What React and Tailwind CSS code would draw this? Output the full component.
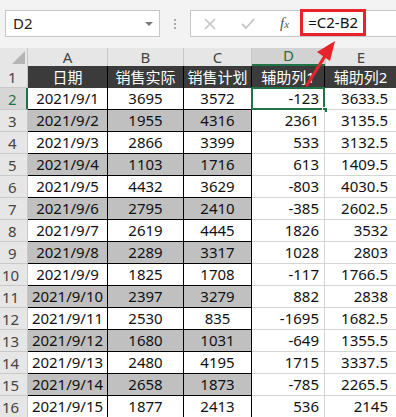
import React from "react";

const rows = [
  ["2021/9/1", "3695", "3572", "-123", "3633.5"],
  ["2021/9/2", "1955", "4316", "2361", "3135.5"],
  ["2021/9/3", "2866", "3399", "533", "3132.5"],
  ["2021/9/4", "1103", "1716", "613", "1409.5"],
  ["2021/9/5", "4432", "3629", "-803", "4030.5"],
  ["2021/9/6", "2795", "2410", "-385", "2602.5"],
  ["2021/9/7", "2619", "4445", "1826", "3532"],
  ["2021/9/8", "2289", "3317", "1028", "2803"],
  ["2021/9/9", "1825", "1708", "-117", "1766.5"],
  ["2021/9/10", "2397", "3279", "882", "2838"],
  ["2021/9/11", "2530", "835", "-1695", "1682.5"],
  ["2021/9/12", "1680", "1031", "-649", "1355.5"],
  ["2021/9/13", "2480", "4195", "1715", "3337.5"],
  ["2021/9/14", "2658", "1873", "-785", "2265.5"],
  ["2021/9/15", "1877", "2413", "536", "2145"],
];

const font = { fontFamily: '"Noto Sans", "Noto Sans CJK SC", sans-serif' };

export default function App() {
  return (
    <div
      className="relative w-[396px] h-[417px] overflow-hidden bg-[#f0f0f0] text-[15px] leading-none text-[#111]"
      style={font}
    >
      {/* Formula bar */}
      <div className="flex items-center h-[48px] pt-[10px] pb-[11px] bg-[#f3f3f3]">
        <div className="ml-[5px] w-[155px] h-[27px] bg-white border border-[#c6c6c6] flex items-center justify-between pl-[7px] pr-[6px]">
          <span className="text-[15px] text-[#222]">D2</span>
          <span className="w-0 h-0 border-l-[4px] border-r-[4px] border-t-[4px] border-l-transparent border-r-transparent border-t-[#777]" />
        </div>
        <div className="w-[30px] flex flex-col items-center gap-[2px]">
          <span className="w-[2px] h-[2px] bg-[#aaa]" />
          <span className="w-[2px] h-[2px] bg-[#aaa]" />
          <span className="w-[2px] h-[2px] bg-[#aaa]" />
        </div>
        <div className="flex-1 h-[27px] bg-white border border-r-0 border-[#c6c6c6] flex items-center">
          <svg width="14" height="14" viewBox="0 0 14 14" className="ml-[12px]">
            <path d="M2 2 L12 12 M12 2 L2 12" stroke="#c4c4c4" strokeWidth="1.6" />
          </svg>
          <svg width="16" height="14" viewBox="0 0 16 14" className="ml-[23px]">
            <path d="M2 7 L6 11 L14 2" stroke="#c4c4c4" strokeWidth="1.8" fill="none" />
          </svg>
          <span
            className="ml-[24px] text-[15px] italic text-[#555]"
            style={{ fontFamily: '"Liberation Serif", "DejaVu Serif", serif' }}
          >
            f<span className="text-[11px]">x</span>
          </span>
          <span className="ml-[11px] -mt-[3px] w-[66px] h-[27px] border-[3px] border-[#e8232b] flex items-center justify-center text-[15px] text-[#111]">
            =C2-B2
          </span>
        </div>
      </div>

      {/* Column headers */}
      <div className="flex h-[18px] bg-[#e6e6e6] text-[#444]">
        <div className="w-[28px] h-full relative border-r border-[#c8c8c8]">
          <svg className="absolute left-[12px] top-[3px]" width="13" height="13" viewBox="0 0 13 13">
            <path d="M13 0 L13 13 L0 13 Z" fill="#b5b5b5" />
          </svg>
        </div>
        <div className="w-[80px] flex items-end justify-center pb-[1px] border-r border-[#c8c8c8]">A</div>
        <div className="w-[76px] flex items-end justify-center pb-[1px] border-r border-[#c8c8c8]">B</div>
        <div className="w-[68px] flex items-end justify-center pb-[1px] border-r border-[#c8c8c8]">C</div>
        <div className="w-[73px] flex items-end justify-center pb-[1px] bg-[#d2d2d2] text-[#217346] border-b-2 border-[#217346]">D</div>
        <div className="flex-1 flex items-end justify-center pb-[1px] border-l border-[#c8c8c8]">E</div>
      </div>

      {/* Row 1 */}
      <div className="flex h-[22px]">
        <div className="w-[28px] bg-[#e6e6e6] text-[#444] flex items-end pl-[8px] pb-[2px] border-r border-b border-[#c8c8c8]">1</div>
        <div className="w-[80px] bg-[#3b3b3b] text-white flex items-center justify-center border-r border-black">日期</div>
        <div className="w-[76px] bg-[#3b3b3b] text-white flex items-center justify-center border-r border-black">销售实际</div>
        <div className="w-[68px] bg-[#3b3b3b] text-white flex items-center justify-center border-r border-black">销售计划</div>
        <div className="w-[73px] bg-[#3b3b3b] text-white flex items-center justify-center border-r border-black">辅助列1</div>
        <div className="flex-1 bg-[#3b3b3b] text-white flex items-center justify-center">辅助列2</div>
      </div>

      {/* Data rows */}
      {rows.map((r, i) => {
        const n = i + 2;
        const gray = n % 2 === 1;
        const sel = n === 2;
        const fill = gray ? "bg-[#c0c0c0]" : "bg-white";
        return (
          <div key={n} className="flex h-[22px]">
            <div
              className={
                sel
                  ? "w-[28px] bg-[#d6d6d6] text-[#217346] flex items-end pb-[2px] border-r-2 border-b border-r-[#217346] border-b-[#c8c8c8] " + (n < 10 ? "pl-[8px]" : "pl-[2px]")
                  : "w-[28px] bg-[#e6e6e6] text-[#444] flex items-end pb-[2px] border-r border-b border-[#c8c8c8] " + (n < 10 ? "pl-[8px]" : "pl-[2px]")
              }
            >
              {n}
            </div>
            <div className={"w-[80px] flex items-center justify-center border-r border-b border-black " + fill}>{r[0]}</div>
            <div className={"w-[76px] flex items-center justify-center border-r border-b border-black " + fill}>{r[1]}</div>
            <div className={"w-[68px] flex items-center justify-center border-r border-b border-black " + fill}>{r[2]}</div>
            <div className="relative w-[73px] bg-white flex items-center justify-end pr-[5px] border-r border-b border-[#d4d4d4]">
              {r[3]}
              {sel && (
                <>
                  <span className="absolute -left-[1px] -top-[1px] w-[74px] h-[23px] border-2 border-[#217346]" />
                  <span className="absolute -right-[4px] -bottom-[4px] w-[6px] h-[6px] bg-[#217346] border border-white" />
                </>
              )}
            </div>
            <div className="flex-1 bg-white flex items-center justify-end pr-[8px] border-b border-[#d4d4d4]">{r[4]}</div>
          </div>
        );
      })}

      {/* Red arrow annotation */}
      <svg className="absolute left-0 top-0 pointer-events-none" width="396" height="417" viewBox="0 0 396 417">
        <path d="M307 85 L325 56" stroke="#e8232b" strokeWidth="3.2" strokeLinecap="round" />
        <path d="M335 41 L317 52 L330 61 Z" fill="#e8232b" />
      </svg>
    </div>
  );
}
